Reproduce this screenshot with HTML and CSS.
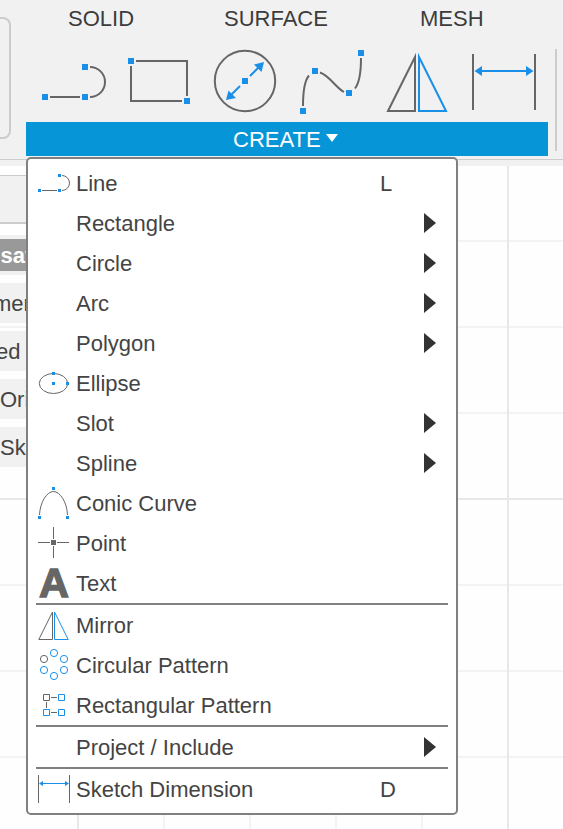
FILE: index.html
```html
<!DOCTYPE html>
<html lang="en">
<head>
<meta charset="utf-8">
<title>Sketch</title>
<link rel="stylesheet" href="styles.css">
</head>
<body>
<div class="app">
  <header class="toolbar">
    <div class="previous-group"></div>
    <div class="ribbon">
      <nav class="tabs"><span class="tab">SOLID</span><span class="tab">SURFACE</span><span class="tab">MESH</span></nav>
      <div class="tools">
        <svg class="tool" viewBox="30 42 86 80"><path class="g" d="M50 97H80M90 67A15 15 0 0 1 90 97"/><path class="bf" d="M42 94h6v6h-6zM82 94h6v6h-6zM82 64h6v6h-6z"/></svg>
        <svg class="tool" viewBox="116 42 86 80"><path class="g" d="M136 61H187V96M131 66V101H182"/><path class="bf" d="M128 58h6v6h-6zM184 98h6v6h-6z"/></svg>
        <svg class="tool" viewBox="202 42 86 80"><circle class="g" cx="245" cy="81" r="30.2"/><path class="b" d="M250 76L260 66M240 86L230 96"/><path class="bf" d="M242 78h6v6h-6zM264 62L254 64.500L261.500 72zM226 100L228.500 90.500L236 98z"/></svg>
        <svg class="tool" viewBox="288 42 86 80"><path class="g" d="M303 106C303 91 305 80 309 75.500M320 72.500C330 76 335 87 344 92M355 88.500C360 82 361 70 361 58"/><path class="bf" d="M300 108h6v6h-6zM312 68h6v6h-6zM346 90h6v6h-6zM358 50h6v6h-6z"/></svg>
        <svg class="tool" viewBox="374 42 86 80"><path class="g" d="M388 111L415 57V111z"/><path class="b" d="M446 111L419 57V111z"/></svg>
        <svg class="tool" viewBox="460 42 86 80"><path class="g" d="M473 54V110M535 54V110"/><path class="b" d="M480 71H528"/><path class="bf" d="M474.500 71L482 66V76zM533.500 71L526 66V76z"/></svg>
      </div>
      <div class="create">CREATE<svg class="caret" viewBox="0 0 12 8"><path d="M0 0H12L6 8z"/></svg></div>
    </div>
    <div class="divider"></div>
  </header>
  <main class="canvas">
    <svg class="grid-lines" viewBox="0 166 563 663">
      <path class="minor" d="M164 166V829M250 166V829M336 166V829M422 166V829M0 241H563M0 327H563M0 413H563M0 585H563M0 671H563M0 757H563"/>
      <path class="major" d="M78 166V829M508 166V829M0 499H563"/>
    </svg>
    <aside class="browser">
      <div class="browser-head"></div>
      <div class="node active"><span>sav</span></div>
      <div class="node clip">ment</div>
      <div class="node ed">ed</div>
      <div class="node">Ori</div>
      <div class="node">Sk</div>
    </aside>
  </main>
  <div class="menu">
    <div class="item"><svg class="icon" viewBox="36 163 36 40"><path class="g" d="M42 190.500H57M62 175.500A7.500 7.500 0 0 1 62 190.500"/><path class="bf" d="M38 189h3v3h-3zM58 189h3v3h-3zM58 174h3v3h-3z"/></svg><span class="label">Line</span><span class="key">L</span></div>
    <div class="item"><span class="label">Rectangle</span><svg class="arrow" viewBox="0 0 12 20"><path d="M0 0L12 10L0 20z"/></svg></div>
    <div class="item"><span class="label">Circle</span><svg class="arrow" viewBox="0 0 12 20"><path d="M0 0L12 10L0 20z"/></svg></div>
    <div class="item"><span class="label">Arc</span><svg class="arrow" viewBox="0 0 12 20"><path d="M0 0L12 10L0 20z"/></svg></div>
    <div class="item"><span class="label">Polygon</span><svg class="arrow" viewBox="0 0 12 20"><path d="M0 0L12 10L0 20z"/></svg></div>
    <div class="item"><svg class="icon" viewBox="36 363 36 40"><ellipse class="g" cx="53.500" cy="383.500" rx="14.200" ry="10"/><path class="bf" d="M52 372h3v3h-3zM52 382h3v3h-3zM66 382h3v3h-3z"/></svg><span class="label">Ellipse</span></div>
    <div class="item"><span class="label">Slot</span><svg class="arrow" viewBox="0 0 12 20"><path d="M0 0L12 10L0 20z"/></svg></div>
    <div class="item"><span class="label">Spline</span><svg class="arrow" viewBox="0 0 12 20"><path d="M0 0L12 10L0 20z"/></svg></div>
    <div class="item"><svg class="icon" viewBox="36 483 36 40"><path class="g" d="M39.500 515C40 502 47 491.500 53.500 491.500S67 502 67.500 515"/><path class="bf" d="M38 516h3v3h-3zM66 516h3v3h-3zM52 487h3v3h-3z"/></svg><span class="label">Conic Curve</span></div>
    <div class="item"><svg class="icon" viewBox="36 523 36 40"><path class="g" d="M38 542.500H50M57 542.500H69M53.500 527V539M53.500 546V558"/><path class="gf" d="M51 540h5v5h-5z"/></svg><span class="label">Point</span></div>
    <div class="item"><span class="icon letter">A</span><span class="label">Text</span></div>
    <hr>
    <div class="item"><svg class="icon" viewBox="36 605 36 40"><path class="g" d="M38.800 639.500L52.500 612V639.500z"/><path class="b" d="M68.200 639.500L54.500 612V639.500z"/></svg><span class="label">Mirror</span></div>
    <div class="item"><svg class="icon" viewBox="36 645 36 40"><circle class="g" cx="44" cy="659" r="3.600"/><g class="b"><circle cx="54" cy="653" r="3.600"/><circle cx="64" cy="659" r="3.600"/><circle cx="64" cy="670" r="3.600"/><circle cx="54" cy="676" r="3.600"/><circle cx="44" cy="670" r="3.600"/></g></svg><span class="label">Circular Pattern</span></div>
    <div class="item"><svg class="icon" viewBox="36 685 36 40"><path class="g" d="M43.500 694.500h6v6h-6zM51 697.500H57M46.500 702V708M51 712.500H57"/><path class="b" d="M58.500 694.500h6v6h-6zM43.500 709.500h6v6h-6zM58.500 709.500h6v6h-6z"/></svg><span class="label">Rectangular Pattern</span></div>
    <hr>
    <div class="item"><span class="label">Project / Include</span><svg class="arrow" viewBox="0 0 12 20"><path d="M0 0L12 10L0 20z"/></svg></div>
    <hr>
    <div class="item"><svg class="icon" viewBox="36 769 36 40"><path class="g" d="M38.500 775V803M69.500 775V803"/><path class="b" d="M41 783.500H67"/><path class="bf" d="M39 783.500L43 781V786zM69 783.500L65 781V786z"/></svg><span class="label">Sketch Dimension</span><span class="key">D</span></div>
  </div>
</div>
</body>
</html>
```
FILE: styles.css
```css
* { box-sizing: border-box; }
body { margin: 0; font: 22px/40px "Liberation Sans", Arial, sans-serif; color: #444; }
.app { position: relative; width: 563px; height: 829px; overflow: hidden; background: #fefefe; }
svg { display: block; flex: none; }

.toolbar { display: flex; height: 166px; background: linear-gradient(#ccc, #ccc) 0 159px / 100% 1px no-repeat #f1f1f1; }
.previous-group { width: 11px; height: 122px; margin: 17px 15px 0 0; border: 2px solid #ccc; border-left: 0; border-radius: 0 8px 8px 0; }
.ribbon { width: 522px; }
.divider { width: 2px; height: 102px; margin: 49px 0 0 7px; background: #ccc; }
.tabs { display: grid; grid-template-columns: 156px 196px auto; height: 42px; padding-left: 42px; line-height: 37px; color: #3c3c3c; }
.tools { display: flex; height: 80px; padding-left: 4px; }
.tool { width: 86px; height: 80px; }
.create { display: flex; height: 34px; padding-left: 207px; background: #0696d7; color: #fff; line-height: 35px; }
.caret { width: 12px; height: 8px; margin: 12px 0 0 5px; fill: #fff; }

.g, .b { fill: none; stroke: #666; stroke-width: 2; stroke-miterlimit: 10; }
.b { stroke: #1a8fe8; }
.bf { fill: #1a8fe8; }
.gf { fill: #666; }
.icon .g, .icon .b { stroke-width: 1; }

.canvas { display: grid; height: 663px; }
.canvas > * { grid-area: 1 / 1; }
.grid-lines { width: 563px; height: 663px; stroke-width: 2; }
.minor { stroke: #f3f3f3; }
.major { stroke: #e8e8e8; }
.browser { width: 26px; padding-top: 9px; overflow: hidden; }
.browser-head { height: 49px; margin-bottom: 11px; background: #f1f1f1; border-top: 1px solid #ccc; border-bottom: 2px solid #ccc; }
.node { height: 40px; margin-bottom: 8px; background: #f1f1f1; line-height: 41px; white-space: nowrap; }
.node.active { display: flex; padding: 4px 0; color: #fff; font-weight: bold; line-height: 33px; }
.active span { width: 26px; background: #999; text-indent: 0.5px; }
.clip { text-indent: -7px; }
.ed { text-indent: -4px; }

.menu { position: absolute; left: 26px; top: 157px; width: 432px; height: 658px; padding: 4px 8px; border: 2px solid #808080; border-radius: 5px; background: #fff; }
.item { display: grid; grid-template-columns: 40px 304px 44px 12px; height: 40px; align-items: center; }
.item > * { grid-row: 1; }
.icon { grid-column: 1; width: 36px; height: 40px; }
.label { grid-column: 2; padding-top: 1px; line-height: 39px; white-space: nowrap; }
.key { grid-column: 3; padding-top: 1px; line-height: 39px; }
.arrow { grid-column: 4; width: 12px; height: 20px; fill: #333; }
.letter { padding-left: 3px; font-size: 41.5px; font-weight: bold; color: #666; -webkit-text-stroke: 1.4px #666; }
hr { height: 2px; margin: 0; border: 0; background: #808080; }
```
